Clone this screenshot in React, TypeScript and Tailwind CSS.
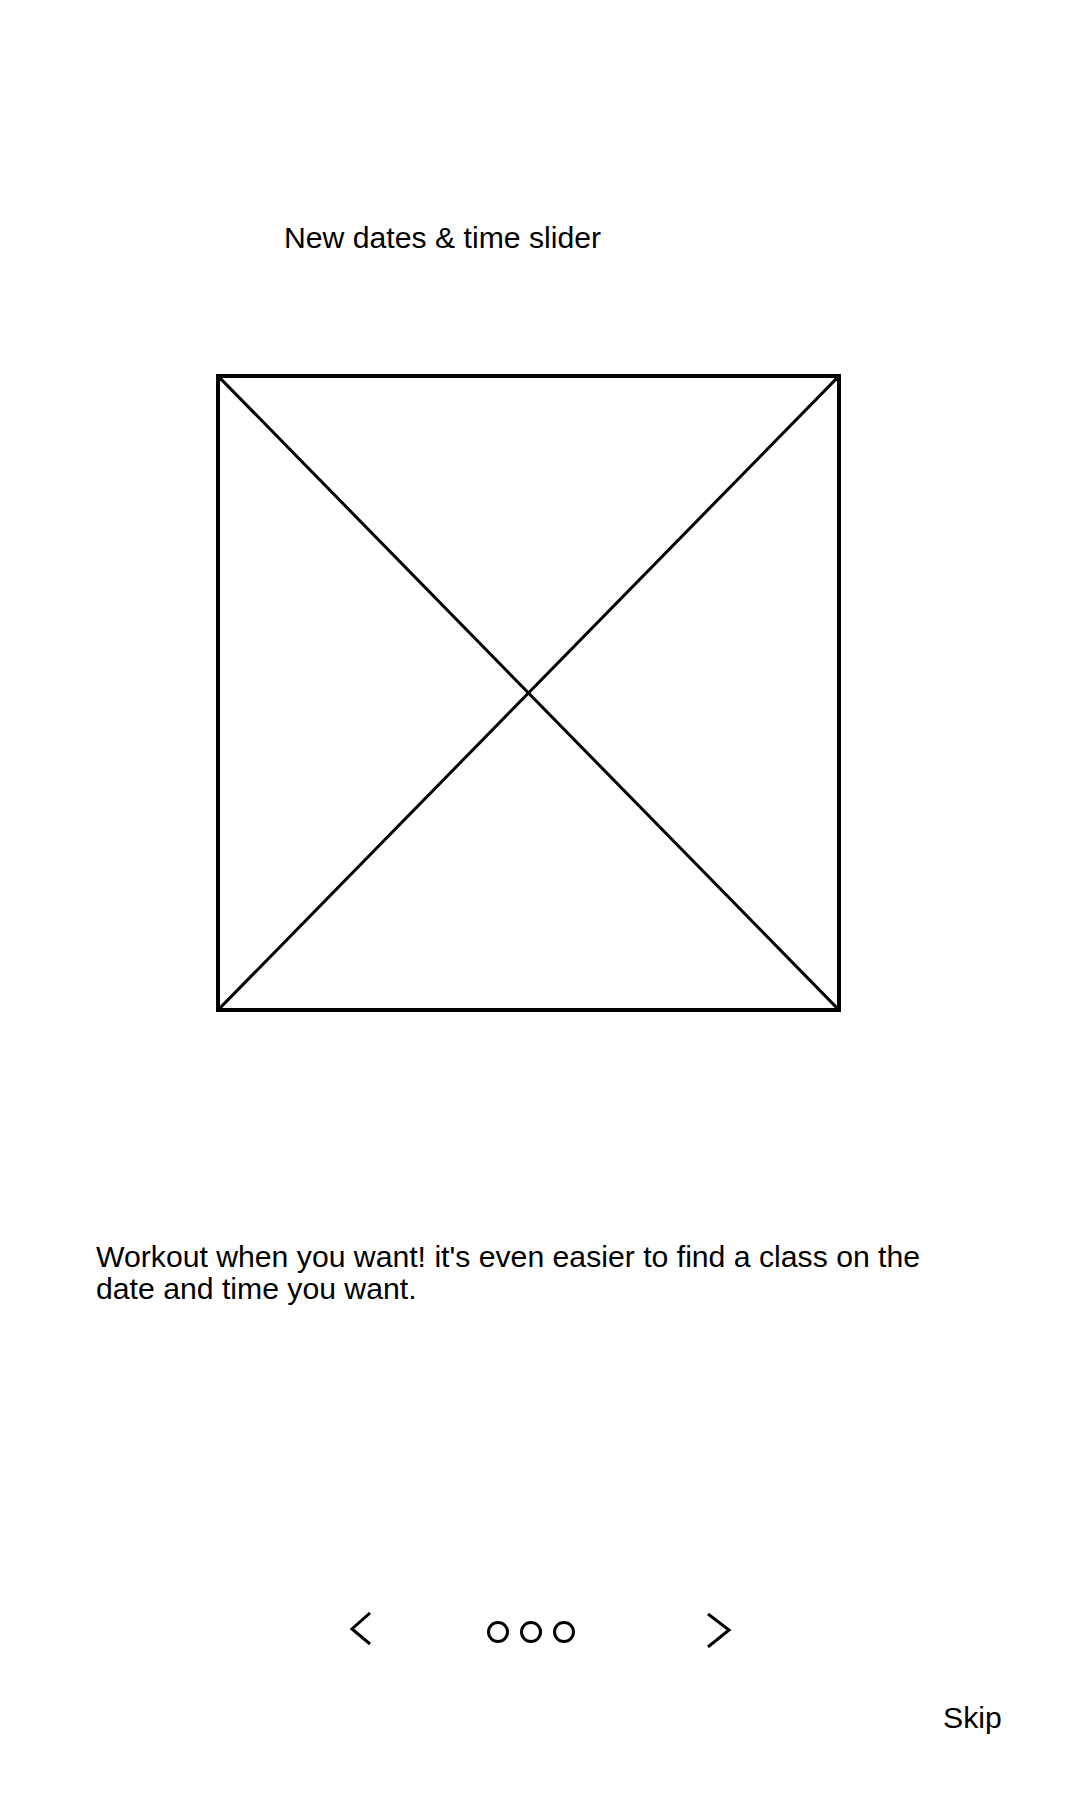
import React from 'react';

function Placeholder() {
    return (
        <div className="ml-[216px] mt-[120px] h-[638px] w-[625px] border-4 border-black">
            <svg
                className="block h-full w-full"
                viewBox="0 0 100 100"
                preserveAspectRatio="none"
            >
                <line
                    x1="0"
                    y1="0"
                    x2="100"
                    y2="100"
                    stroke="#000"
                    strokeWidth="3"
                    vectorEffect="non-scaling-stroke"
                />
                <line
                    x1="100"
                    y1="0"
                    x2="0"
                    y2="100"
                    stroke="#000"
                    strokeWidth="3"
                    vectorEffect="non-scaling-stroke"
                />
            </svg>
        </div>
    );
}

function Pager() {
    return (
        <div className="mt-[307px] flex h-[36px] items-center pl-[348px]">
            <svg width="26" height="36" viewBox="0 0 26 36">
                <polyline
                    points="22,1 4,17 22,32"
                    fill="none"
                    stroke="#000"
                    strokeWidth="3"
                />
            </svg>
            <div className="ml-[113px] flex gap-[11px] pt-[3px]">
                {[0, 1, 2].map((i) => (
                    <span
                        key={i}
                        className="block h-[22px] w-[22px] rounded-full border-[3px] border-black"
                    />
                ))}
            </div>
            <svg className="ml-[129px]" width="28" height="36" viewBox="0 0 28 36">
                <polyline
                    points="4,2 25,18 4,35"
                    fill="none"
                    stroke="#000"
                    strokeWidth="3"
                />
            </svg>
        </div>
    );
}

export default function App() {
    return (
        <div
            className="h-[1800px] w-[1080px] overflow-hidden bg-white text-black"
            style={{ fontFamily: '"Liberation Sans", Arial, sans-serif' }}
        >
            <h1 className="pl-[284px] pt-[222px] text-[30.2px] font-normal leading-[32px]">
                New dates &amp; time slider
            </h1>

            <Placeholder />

            <p className="ml-[96px] mt-[229px] w-[850px] text-[30.2px] leading-[32px]">
                Workout when you want! it's even easier to find a class on the
                date and time you want.
            </p>

            <Pager />

            <div className="mt-[54px] pl-[943px] text-[30.2px] leading-[32px]">Skip</div>
        </div>
    );
}
